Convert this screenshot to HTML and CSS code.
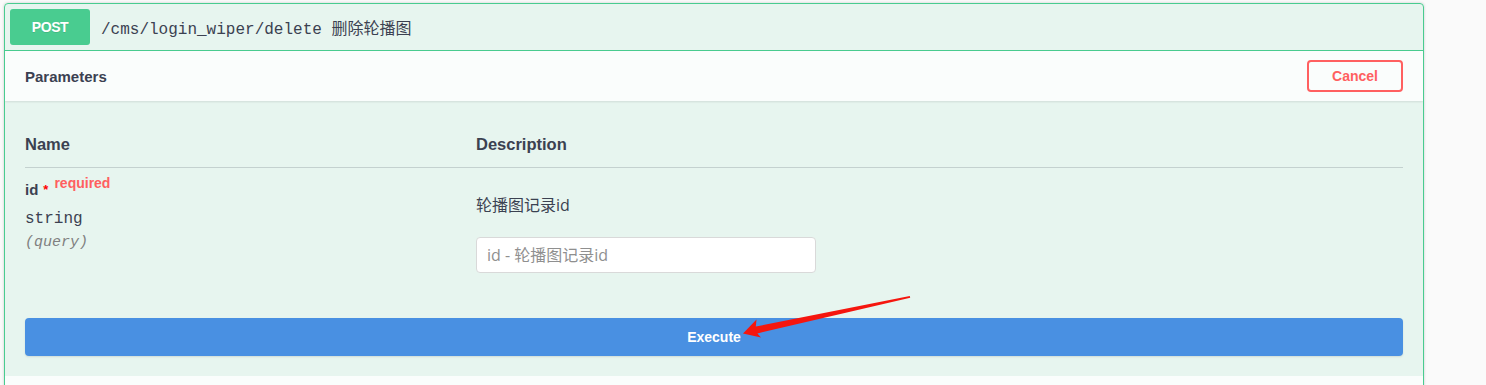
FILE: index.html
```html
<!doctype html>
<html lang="zh">
    <head>
        <meta charset="UTF-8" />
        <meta name="viewport" content="width=device-width, initial-scale=1.0" />
        <title>删除轮播图</title>
        <link rel="stylesheet" href="styles.css">
    </head>
    <body>
        <div class="page">
            <div class="opblock">
                <div class="summary">
                    <span class="method">POST</span>
                    <span class="path">/cms/login_wiper/delete 删除轮播图</span>
                </div>

                <div class="section-header">
                    <h4>Parameters</h4>
                    <button type="button" class="btn-cancel">Cancel</button>
                </div>

                <div class="table-container">
                    <div class="params">
                        <div class="th">Name</div>
                        <div class="th">Description</div>

                        <div class="td">
                            <div class="param-name">id<span class="star">*</span><span class="req">required</span></div>
                            <div class="param-type">string</div>
                            <div class="param-in">(query)</div>
                        </div>
                        <div class="td">
                            <p class="param-desc">轮播图记录id</p>
                            <input type="text" class="param-input" placeholder="id - 轮播图记录id" />
                        </div>
                    </div>
                </div>

                <div class="execute-wrapper">
                    <button type="button" class="btn-execute">Execute</button>
                </div>

                <div class="responses-header"></div>
            </div>
        </div>

        <!-- стрелка-пометка поверх скриншота -->
        <svg class="annotation" width="1486" height="385" viewBox="0 0 1486 385">
            <polygon points="743,333.5 756.5,319.5 755.8,326.6 909.8,296 910.2,297.8 757.4,333.4 761,337.5" fill="#f5160e" />
        </svg>
    </body>
</html>
```

FILE: styles.css
```css
body {
    margin: 0;
    background: #fafafa;
    font-family: "Liberation Sans", "Noto Sans CJK SC", sans-serif;
    color: #3b4151;
}
.page {
    padding: 3px 0 0 4px;
}
.opblock {
    width: 1418px;
    border: 1px solid #49cc90;
    border-radius: 4px;
    background: rgba(73, 204, 144, 0.1);
    box-shadow: 0 0 3px rgba(0, 0, 0, 0.19);
    overflow: hidden;
}
.summary {
    display: flex;
    align-items: center;
    height: 46px;
    padding: 0 5px;
    border-bottom: 1px solid #49cc90;
}
.method {
    width: 80px;
    height: 36px;
    line-height: 37px;
    text-align: center;
    background: #49cc90;
    color: #fff;
    border-radius: 3px;
    font-size: 14px;
    font-weight: bold;
    letter-spacing: -0.4px;
    text-shadow: 0 1px 0 rgba(0, 0, 0, 0.1);
}
.path {
    margin-left: 11px;
    font-family: "Liberation Mono", "Noto Sans CJK SC", monospace;
    font-size: 16px;
}
.section-header {
    display: flex;
    align-items: center;
    justify-content: space-between;
    height: 50px;
    padding: 0 20px;
    background: rgba(255, 255, 255, 0.8);
    box-shadow: 0 1px 2px rgba(0, 0, 0, 0.1);
}
.section-header h4 {
    margin: 0;
    font-size: 15px;
    font-weight: bold;
}
.btn-cancel {
    width: 96px;
    height: 32px;
    border: 2px solid #ff6060;
    border-radius: 4px;
    background: transparent;
    color: #ff6060;
    font-family: "Liberation Sans", sans-serif;
    font-size: 14px;
    font-weight: bold;
    cursor: pointer;
}
.table-container {
    padding: 20px 20px 15px;
}
.params {
    display: grid;
    grid-template-columns: 451px 1fr;
}
.th {
    padding: 12px 0;
    line-height: 22px;
    font-size: 16.5px;
    font-weight: bold;
    border-bottom: 1px solid rgba(59, 65, 81, 0.2);
}
.td {
    padding: 10px 0;
}
.param-name {
    line-height: 24px;
    font-size: 15px;
    font-weight: bold;
}
.star {
    margin-left: 5px;
    color: #f00;
    font-size: 13px;
    position: relative;
    top: -1px;
}
.req {
    margin-left: 6px;
    color: #ff5f5f;
    font-size: 14px;
    font-weight: 600;
    position: relative;
    top: -7px;
}
.param-type {
    padding: 5px 0;
    line-height: 22px;
    font-family: "Liberation Mono", monospace;
    font-size: 16px;
}
.param-in {
    line-height: 16px;
    font-family: "Liberation Mono", monospace;
    font-size: 15px;
    font-style: italic;
    color: #808080;
}
.param-desc {
    margin: 16px 0 21px;
    line-height: 22px;
    font-family: "Open Sans", "Noto Sans CJK SC", sans-serif;
    font-size: 16px;
}
.param-input {
    display: block;
    width: 340px;
    height: 36px;
    box-sizing: border-box;
    padding: 6px 10px;
    border: 1px solid #d9d9d9;
    border-radius: 4px;
    background: #fff;
    font-family: "Open Sans", "Noto Sans CJK SC", sans-serif;
    font-size: 16px;
}
.param-input::placeholder {
    color: #8f8f8f;
}
.execute-wrapper {
    padding: 20px;
}
.btn-execute {
    display: block;
    width: 100%;
    height: 38px;
    border: none;
    border-radius: 4px;
    background: #4990e2;
    color: #fff;
    font-family: "Liberation Sans", sans-serif;
    font-size: 14px;
    font-weight: bold;
    box-shadow: 0 1px 2px rgba(0, 0, 0, 0.1);
    cursor: pointer;
}
.responses-header {
    height: 50px;
    background: rgba(255, 255, 255, 0.8);
}
.annotation {
    position: absolute;
    top: 0;
    left: 0;
    pointer-events: none;
}
```
